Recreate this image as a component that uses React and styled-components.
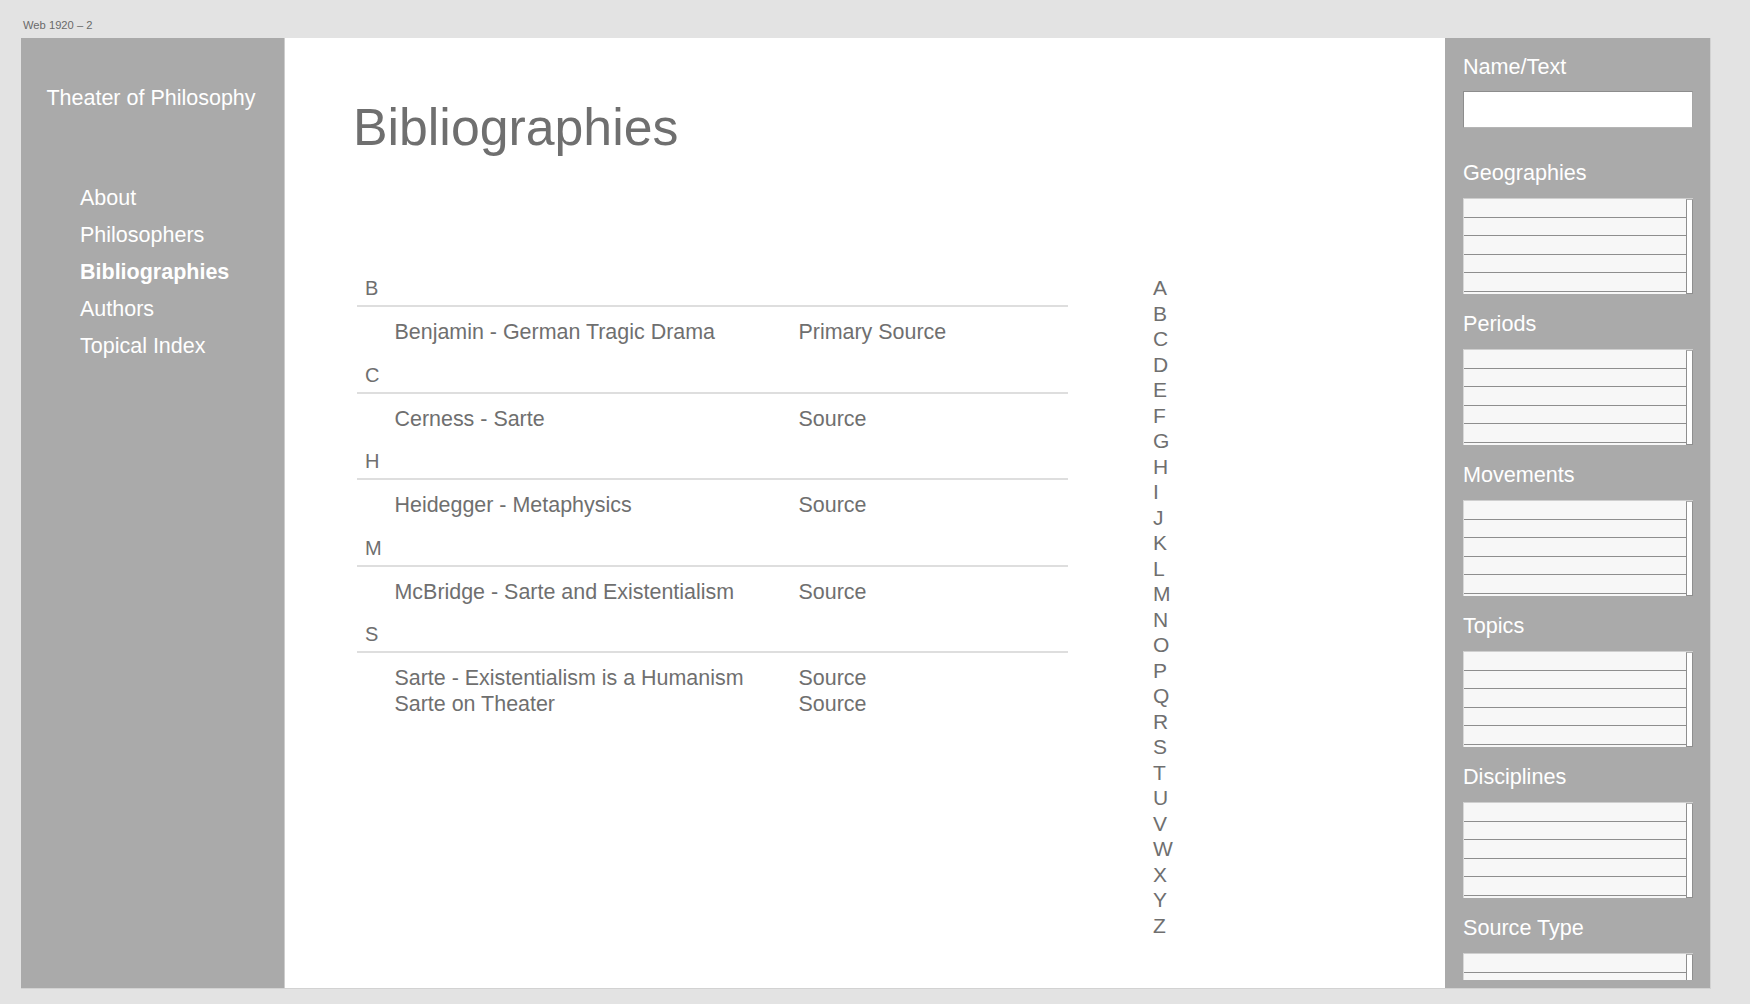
import React from "react";
import styled, { createGlobalStyle } from "styled-components";

const GlobalStyle = createGlobalStyle`
  html, body {
    margin: 0;
    padding: 0;
    background: #e3e3e3;
    font-family: "Liberation Sans", Arial, Helvetica, sans-serif;
  }
  * { box-sizing: border-box; }
`;

const Page = styled.div`
  width: 1750px;
  height: 1004px;
  padding-left: 21px;
  display: flex;
  flex-direction: column;
  overflow: hidden;
`;

const Caption = styled.div`
  height: 38px;
  padding: 18px 0 0 2px;
  font-size: 11.2px;
  line-height: 14px;
  color: #6a6a6a;
`;

const Frame = styled.div`
  width: 1690px;
  height: 951px;
  display: grid;
  grid-template-columns: 264px 1fr 265px;
  background: #ffffff;
  border-right: 1px solid #d2d2d2;
  border-bottom: 1px solid #d2d2d2;
`;

const Sidebar = styled.aside`
  background: #aaaaaa;
  border-right: 1px solid #cdcdcd;
  color: #ffffff;
  padding-top: 46.5px;
  display: flex;
  flex-direction: column;
`;

const SiteTitle = styled.div`
  font-size: 21.5px;
  line-height: 26px;
  text-align: center;
  padding-right: 3px;
`;

const Nav = styled.nav`
  margin-top: 69.5px;
  padding-left: 59px;
  display: flex;
  flex-direction: column;
`;

const NavLink = styled.a`
  font-size: 21.5px;
  line-height: 36.9px;
  color: #ffffff;
  text-decoration: none;
  font-weight: ${(p) => (p.$active ? 700 : 400)};
`;

const Main = styled.main`
  padding: 60px 0 0 73px;
  color: #6f6f6f;
`;

const Heading = styled.h1`
  margin: 0 0 0 -5px;
  font-size: 51.8px;
  line-height: 58px;
  font-weight: 400;
  color: #6f6f6f;
`;

const Content = styled.div`
  margin-top: 119px;
  margin-left: -1px;
  display: flex;
  align-items: flex-start;
  gap: 85px;
`;

const BibList = styled.div`
  width: 711px;
  display: flex;
  flex-direction: column;
`;

const Section = styled.section`
  padding-bottom: 16.5px;
`;

const SectionLetter = styled.div`
  font-size: 20px;
  line-height: 26px;
  padding: 0 0 4px 8px;
  border-bottom: 2px solid #dedede;
`;

const Entries = styled.div`
  padding-top: 12px;
`;

const Entry = styled.div`
  display: grid;
  grid-template-columns: 404px 1fr;
  padding-left: 37.5px;
  font-size: 21.45px;
  line-height: 26px;
`;

const AlphaIndex = styled.div`
  display: flex;
  flex-direction: column;
`;

const AlphaLetter = styled.a`
  font-size: 21px;
  line-height: 25.5px;
  color: #6f6f6f;
  text-decoration: none;
`;

const FilterPanel = styled.aside`
  background: #aaaaaa;
  padding: 17px 17px 8px 18px;
  display: flex;
  flex-direction: column;
  min-height: 0;
`;

const FilterScroll = styled.div`
  flex: 1;
  min-height: 0;
  overflow: hidden;
`;

const FilterLabel = styled.div`
  font-size: 21.6px;
  line-height: 24px;
  color: #ffffff;
  margin-bottom: ${(p) => p.$gap}px;
`;

const TextInput = styled.input`
  display: block;
  width: 100%;
  height: 37px;
  margin: 0 0 33px 0;
  background: #ffffff;
  border: 1px solid #8d8d8d;
  border-bottom-color: #b5b5b5;
  border-right-color: #a5a5a5;
  outline: none;
  padding: 0 6px;
`;

const FilterGroup = styled.div`
  margin-bottom: 18px;
`;

const ListBox = styled.div`
  height: 96px;
  display: flex;
  overflow: hidden;
  background: #f7f7f7;
  border-left: 1px solid #d8d8d8;
  border-top: 1px solid #cfcfcf;
`;

const Rows = styled.div`
  flex: 1;
  display: flex;
  flex-direction: column;
`;

const Row = styled.div`
  flex: 0 0 18.5px;
  background: #f7f7f7;
  border-bottom: 1px solid #8e8e8e;
  box-shadow: 0 1px 0 #d3d3d3;
`;

const ScrollTrack = styled.div`
  width: 7px;
  background: #ffffff;
  border: 1px solid #8f8f8f;
  border-top-color: #b0b0b0;
`;

const navItems = ["About", "Philosophers", "Bibliographies", "Authors", "Topical Index"];

const sections = [
  { letter: "B", entries: [["Benjamin - German Tragic Drama", "Primary Source"]] },
  { letter: "C", entries: [["Cerness - Sarte", "Source"]] },
  { letter: "H", entries: [["Heidegger - Metaphysics", "Source"]] },
  { letter: "M", entries: [["McBridge - Sarte and Existentialism", "Source"]] },
  {
    letter: "S",
    entries: [
      ["Sarte - Existentialism is a Humanism", "Source"],
      ["Sarte on Theater", "Source"],
    ],
  },
];

const letters = "ABCDEFGHIJKLMNOPQRSTUVWXYZ".split("");

const filters = ["Geographies", "Periods", "Movements", "Topics", "Disciplines", "Source Type"];

function FilterList({ label }) {
  return (
    <FilterGroup>
      <FilterLabel $gap={13}>{label}</FilterLabel>
      <ListBox>
        <Rows>
          {[0, 1, 2, 3, 4, 5].map((i) => (
            <Row key={i} />
          ))}
        </Rows>
        <ScrollTrack />
      </ListBox>
    </FilterGroup>
  );
}

export default function App() {
  return (
    <>
      <GlobalStyle />
      <Page>
        <Caption>Web 1920 – 2</Caption>
        <Frame>
          <Sidebar>
            <SiteTitle>Theater of Philosophy</SiteTitle>
            <Nav>
              {navItems.map((n) => (
                <NavLink key={n} href="#" $active={n === "Bibliographies"}>
                  {n}
                </NavLink>
              ))}
            </Nav>
          </Sidebar>
          <Main>
            <Heading>Bibliographies</Heading>
            <Content>
              <BibList>
                {sections.map((s) => (
                  <Section key={s.letter}>
                    <SectionLetter>{s.letter}</SectionLetter>
                    <Entries>
                      {s.entries.map(([name, type]) => (
                        <Entry key={name}>
                          <span>{name}</span>
                          <span>{type}</span>
                        </Entry>
                      ))}
                    </Entries>
                  </Section>
                ))}
              </BibList>
              <AlphaIndex>
                {letters.map((l) => (
                  <AlphaLetter key={l} href="#">
                    {l}
                  </AlphaLetter>
                ))}
              </AlphaIndex>
            </Content>
          </Main>
          <FilterPanel>
            <FilterScroll>
              <FilterLabel $gap={12}>Name/Text</FilterLabel>
              <TextInput type="text" />
              {filters.map((f) => (
                <FilterList key={f} label={f} />
              ))}
            </FilterScroll>
          </FilterPanel>
        </Frame>
      </Page>
    </>
  );
}
